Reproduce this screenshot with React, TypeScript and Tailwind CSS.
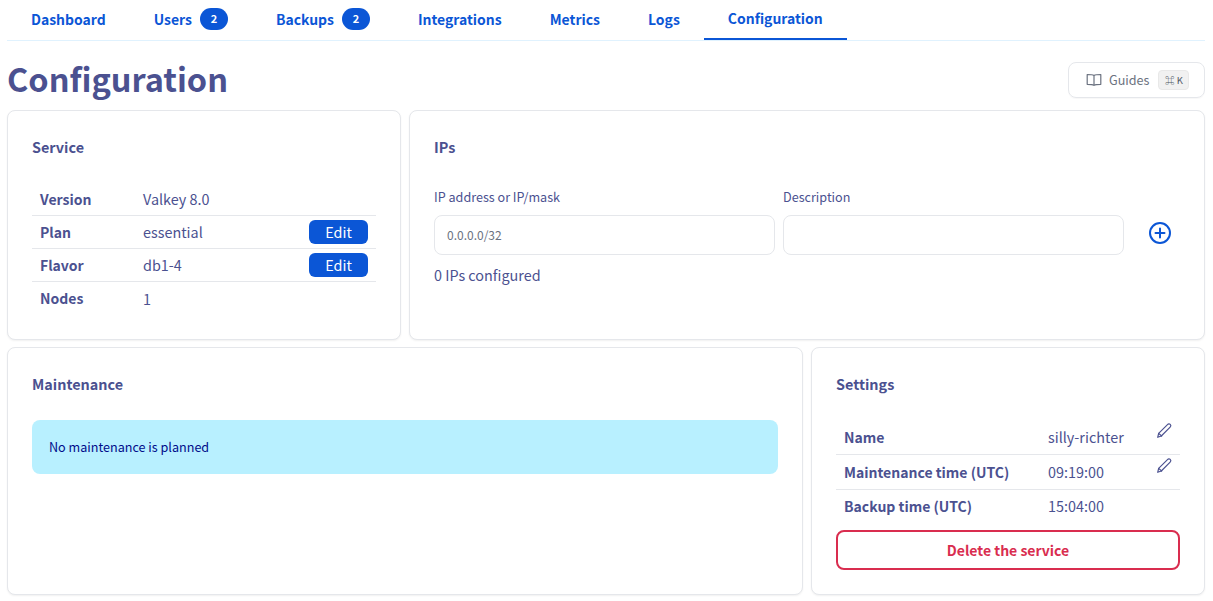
import React from "react";

const font = { fontFamily: '"Noto Sans CJK SC", "Source Sans Pro", "Noto Sans", sans-serif' };

function Tab({ label, badge, active }: { label: string; badge?: string; active?: boolean }) {
  return (
    <div className={`flex items-center gap-2 px-6 h-10 pb-[3px] text-[13.96px] font-semibold text-[#0b56d6] ${active ? "border-b-2 border-[#0b56d6]" : ""}`}>
      <span className="leading-5">{label}</span>
      {badge && (
        <span className="flex items-center justify-center w-7 h-[22px] rounded-full bg-[#0b56d6] text-white text-[11px] font-bold">{badge}</span>
      )}
    </div>
  );
}

function Card({ title, children }: { title: string; children: React.ReactNode }) {
  return (
    <section className="bg-white border border-[#e5e7eb] rounded-lg shadow-[0_1px_2px_rgba(0,0,0,0.06)] px-6 pt-[26px] pb-6 min-w-0">
      <h2 className="text-[14.4px] leading-5 font-semibold text-[#4b5190]">{title}</h2>
      {children}
    </section>
  );
}

function Pencil() {
  return (
    <svg width="17" height="17" viewBox="0 0 16 16" fill="none" stroke="#4b5190" strokeWidth="1.1" strokeLinejoin="round" strokeLinecap="round">
      <path d="M1.6 14.4l.9-3.7 8.3-8.3c.8-.8 1.9-.8 2.6-.1.7.7.7 1.8-.1 2.6l-8.3 8.3-3.4 1.2z" />
      <path d="M2.5 10.7l2.8 2.5" />
    </svg>
  );
}

function EditButton() {
  return (
    <button className="w-[59px] h-6 rounded-md bg-[#0b56d6] text-white text-[14.4px] leading-6 font-normal">Edit</button>
  );
}

function ServiceRow({ label, value, edit, last }: { label: string; value: string; edit?: boolean; last?: boolean }) {
  return (
    <div className={`flex items-center h-[33px] pl-2 pr-2 ${last ? "" : "border-b border-[#e5e7eb]"}`}>
      <span className="w-[103px] text-[14px] font-semibold text-[#4b5190]">{label}</span>
      <span className="flex-1 text-[14.4px] text-[#4b5190]">{value}</span>
      {edit && <EditButton />}
    </div>
  );
}

function SettingRow({ label, value, edit, last }: { label: string; value: string; edit?: boolean; last?: boolean }) {
  return (
    <div className={`relative flex items-center pl-2 ${last ? "h-[32px]" : "h-[35px] border-b border-[#e5e7eb]"}`}>
      <span className="w-[204px] text-[14px] font-semibold text-[#4b5190]">{label}</span>
      <span className="flex-1 text-[14.4px] text-[#4b5190]">{value}</span>
      {edit && (
        <span className="absolute right-[7px] top-[2px]"><Pencil /></span>
      )}
    </div>
  );
}

export default function App() {
  return (
    <div style={font} className="w-[1213px] h-[601px] overflow-hidden bg-white px-[7px] pr-2 text-[#4b5190]">
      <nav className="flex items-stretch h-[41px] border-b border-[#e0f2fe]">
        <Tab label="Dashboard" />
        <Tab label="Users" badge="2" />
        <Tab label="Backups" badge="2" />
        <Tab label="Integrations" />
        <Tab label="Metrics" />
        <Tab label="Logs" />
        <Tab label="Configuration" active />
      </nav>

      <header className="flex items-center justify-between h-[69px]">
        <h1 className="text-[32.5px] leading-[44px] mt-[4px] font-bold text-[#4b5190]">Configuration</h1>
        <div className="flex items-center gap-[7px] w-[137px] h-[36px] mt-[9px] pl-[17px] border border-[#e5e7eb] rounded-lg text-[12.6px] text-[#6b7280] shadow-[0_1px_1px_rgba(0,0,0,0.03)]">
          <svg width="16" height="16" viewBox="0 0 16 16" fill="none" stroke="#6b7280" strokeWidth="1.2" strokeLinejoin="round">
            <path d="M8 3.4C6.8 2.7 5 2.5 1.2 2.5v9.8c3.8 0 5.6.2 6.8 1 1.2-.8 3-1 6.8-1V2.5C11 2.5 9.2 2.7 8 3.4z" />
            <path d="M8 3.4v9.9" />
          </svg>
          <span>Guides</span>
          <span className="flex items-center justify-center gap-1 w-[31px] h-5 ml-0.5 rounded bg-[#f1f1f1] border border-[#e8e8e8] text-[9.5px] text-[#4b5563]">⌘ K</span>
        </div>
      </header>

      <div className="grid grid-cols-[394px_1fr] gap-2 h-[228px] mb-[9px]">
        <Card title="Service">
          <div className="mt-[26px]">
            <ServiceRow label="Version" value="Valkey 8.0" />
            <ServiceRow label="Plan" value="essential" edit />
            <ServiceRow label="Flavor" value="db1-4" edit />
            <ServiceRow label="Nodes" value="1" last />
          </div>
        </Card>
        <Card title="IPs">
          <div className="flex mt-[30px] gap-2 items-start">
            <div className="w-[341px]">
              <div className="text-[12.6px] leading-5 h-[28px] text-[#4b5190]">IP address or IP/mask</div>
              <div className="h-10 border border-[#e5e7eb] rounded-lg flex items-center pl-3 text-[12px] text-[#6b7280]">0.0.0.0/32</div>
            </div>
            <div className="w-[341px]">
              <div className="text-[12.6px] leading-5 h-[28px] text-[#4b5190]">Description</div>
              <div className="h-10 border border-[#e5e7eb] rounded-lg" />
            </div>
            <svg className="ml-[17px] mt-[35px]" width="22" height="22" viewBox="0 0 22 22" fill="none" stroke="#0b56d6" strokeWidth="2" strokeLinecap="round">
              <circle cx="11" cy="11" r="10" />
              <path d="M11 6.5v9M6.5 11h9" />
            </svg>
          </div>
          <div className="mt-[10px] text-[14.4px] leading-5 text-[#4b5190]">0 IPs configured</div>
        </Card>
      </div>

      <div className="grid grid-cols-[1fr_394px] gap-2 h-[248px]">
        <Card title="Maintenance">
          <div className="mt-[26px] h-[54px] rounded-lg bg-[#b8f0ff] flex items-center px-[17px] text-[12.6px] text-[#000c8a]">No maintenance is planned</div>
        </Card>
        <Card title="Settings">
          <div className="mt-[26px]">
            <SettingRow label="Name" value="silly-richter" edit />
            <SettingRow label="Maintenance time (UTC)" value="09:19:00" edit />
            <SettingRow label="Backup time (UTC)" value="15:04:00" last />
          </div>
          <button className="mt-[8px] w-full h-10 rounded-lg border-2 border-[#d92d4f] text-[14px] font-semibold text-[#d92d4f]">Delete the service</button>
        </Card>
      </div>
    </div>
  );
}
